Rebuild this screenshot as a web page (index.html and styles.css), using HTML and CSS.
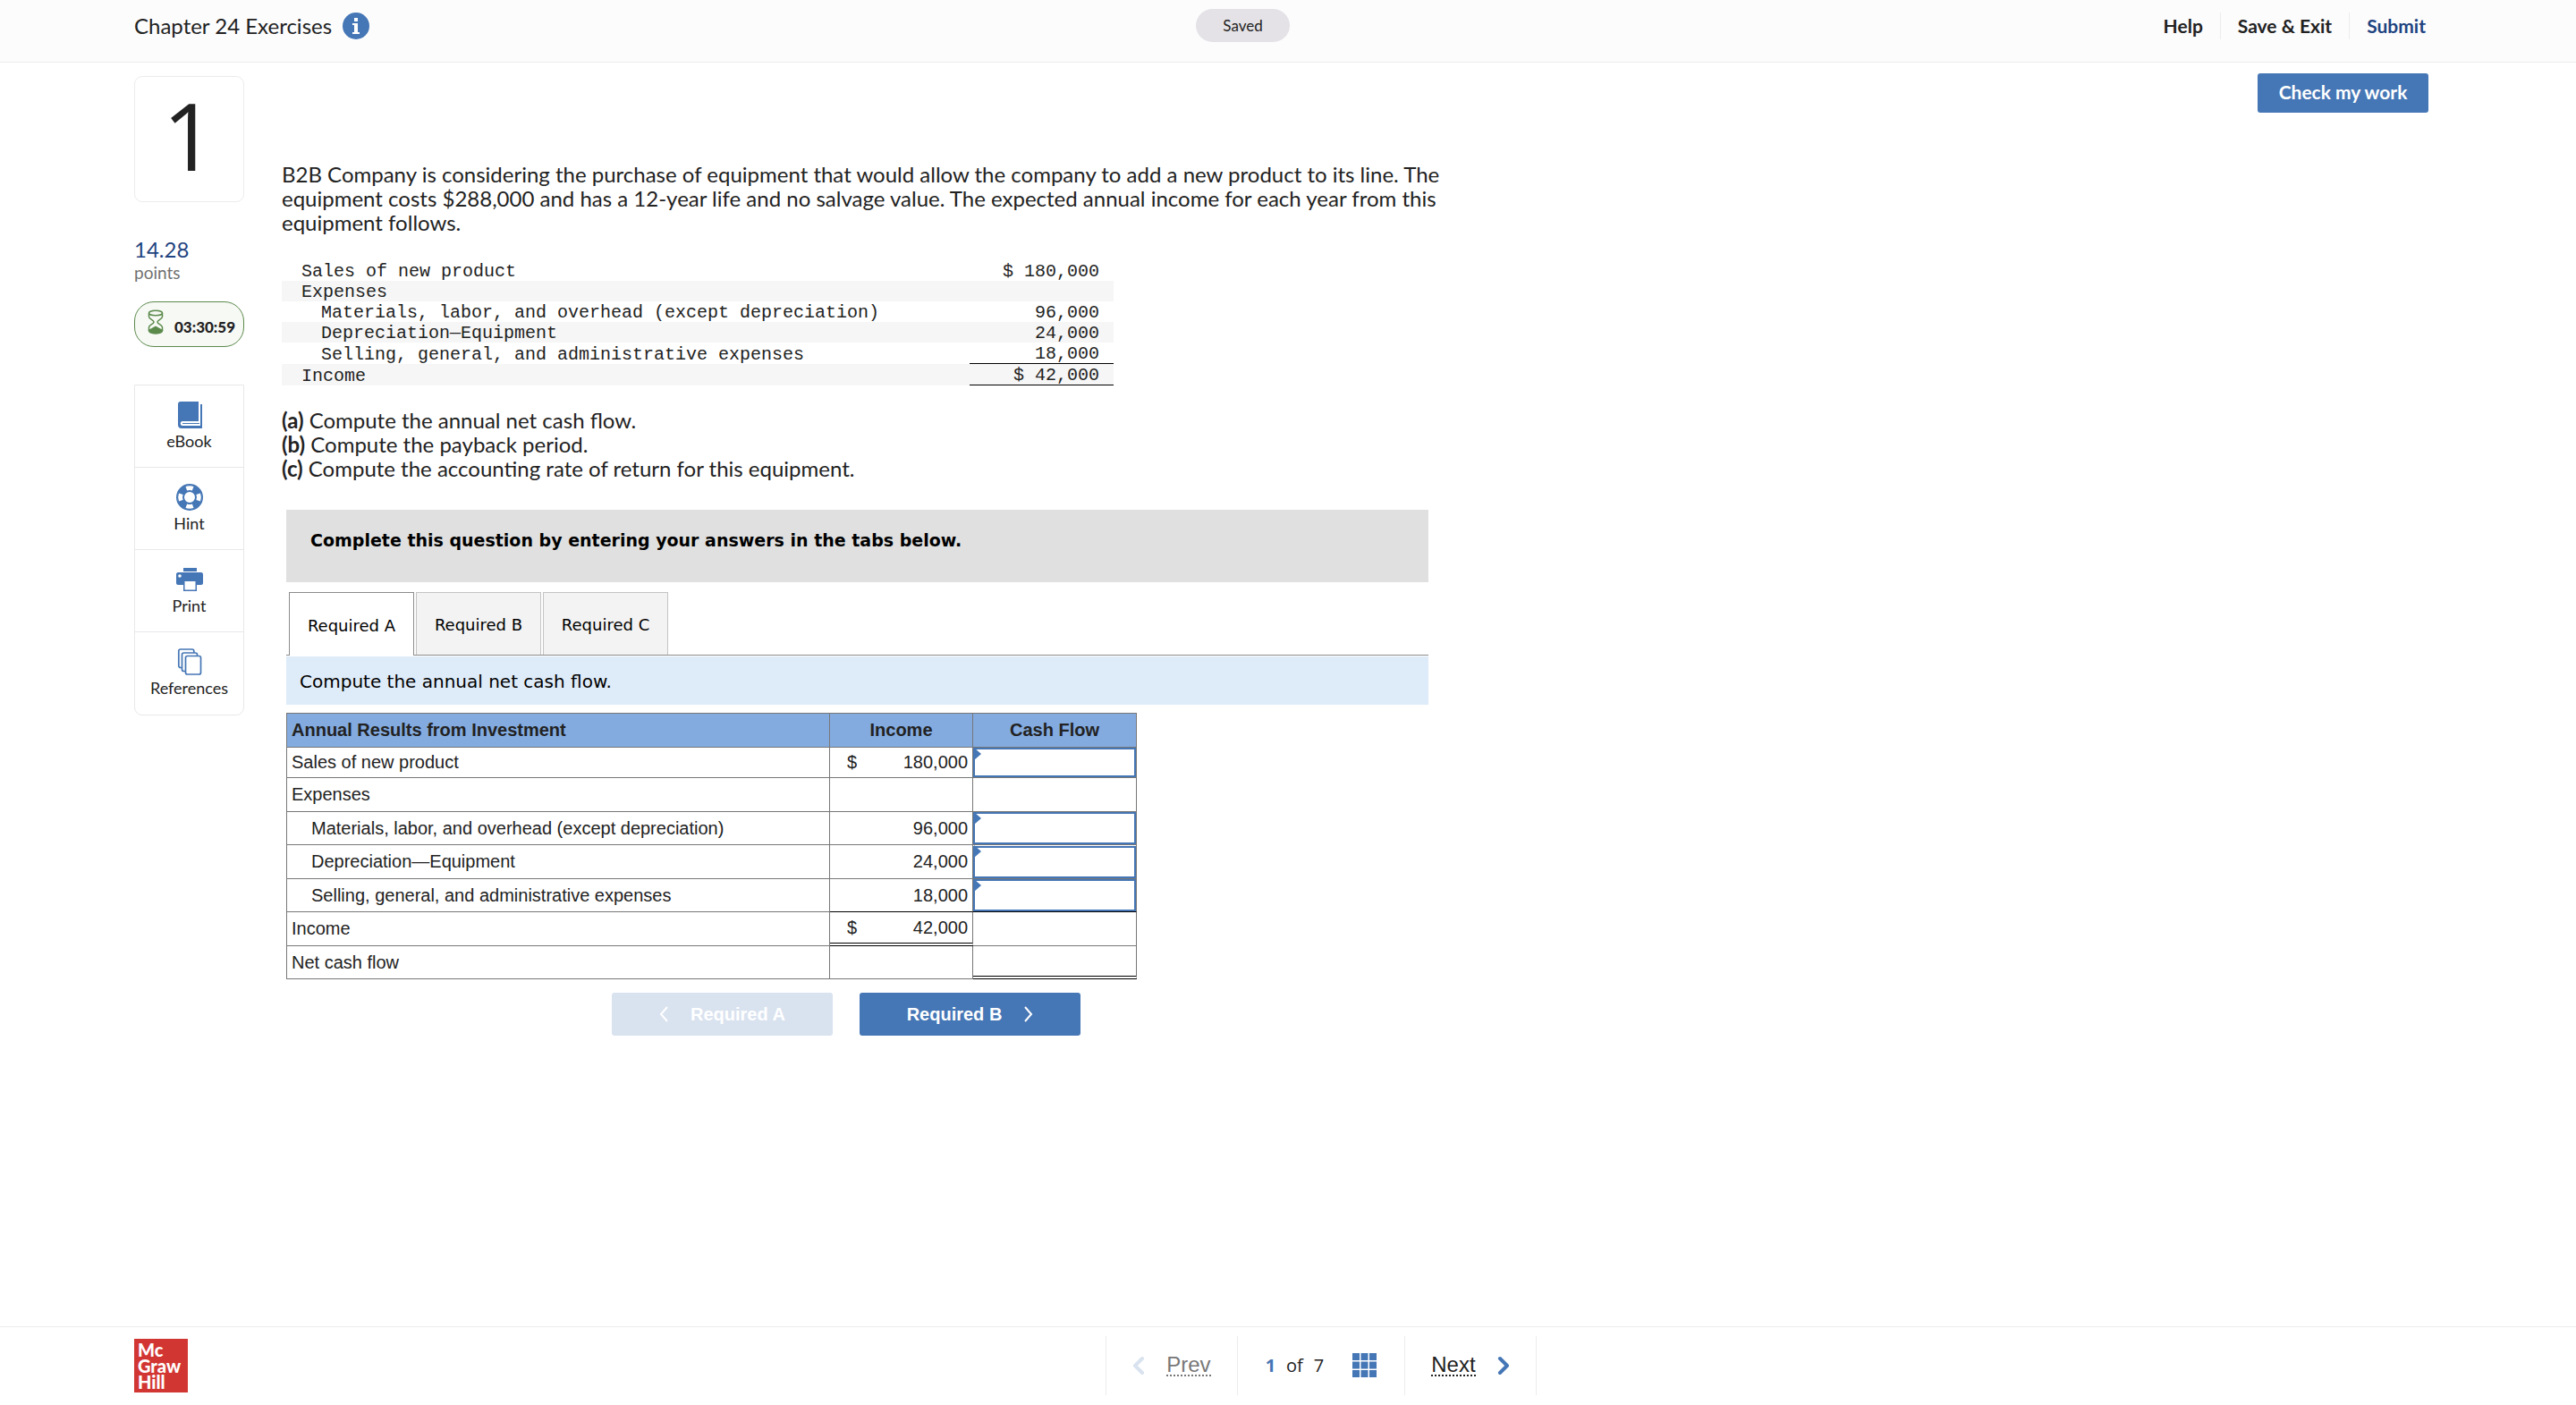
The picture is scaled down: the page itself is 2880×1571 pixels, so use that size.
FILE: index.html
```html
<!DOCTYPE html>
<html lang="en">

<head>
    <meta charset="UTF-8">
    <meta name="viewport" content="width=device-width, initial-scale=1.0">
    <title>Chapter 24 Exercises</title>

    <link rel="stylesheet" href="styles.css">
</head>

<body>
    <header class="header">
        <div class="title">
            <h1>Chapter 24 Exercises</h1>
            <button class="info_btn" type="button" aria-label="Assignment info">
                <svg width="30" height="30" viewBox="0 0 30 30">
                    <circle cx="15" cy="15" r="15" fill="#4576b5" />
                    <path d="M13 6h4v4h-4zM11 12h6v10h2v2h-8v-2h2v-8h-2z" fill="#fff" />
                </svg>
            </button>
        </div>
        <span class="saved">Saved</span>
        <nav class="header_nav">
            <a href="#">Help</a>
            <a href="#">Save &amp; Exit</a>
            <a href="#" class="submit">Submit</a>
        </nav>
    </header>

    <main class="main">
        <aside class="sidebar">
            <div class="number">1</div>
            <div class="score">14.28</div>
            <div class="points">points</div>
            <div class="timer">
                <svg width="18" height="28" viewBox="0 0 18 28" fill="none" stroke="#5b8a4b" stroke-width="1.5">
                    <ellipse cx="9" cy="4" rx="7.5" ry="2.8" />
                    <path d="M1.5 4v4c0 3 5.500 3.500 5.500 6s-5.500 3-5.500 6v4M16.500 4v4c0 3-5.500 3.500-5.500 6s5.500 3 5.500 6v4" />
                    <path d="M1.500 23.500c0 4.500 15 4.500 15 0-2-1-4-2-7.500-4-3.500 2-5.500 3-7.500 4z" fill="#5b8a4b" />
                </svg>
                <span>03:30:59</span>
            </div>
            <div class="tools">
                <button type="button">
                    <svg width="30" height="30" viewBox="0 0 30 30">
                        <path d="M5 0h20v22H7c-3 0-3 5 0 5h20V3h2v27H6c-2 0-4-1-4-4V3c0-2 1-3 3-3z" fill="#4576b5" />
                        <path d="M7 24.500h19" stroke="#4576b5" />
                    </svg>
                    eBook
                </button>
                <button type="button">
                    <svg width="30" height="30" viewBox="0 0 30 30">
                        <circle cx="15" cy="15" r="10" fill="none" stroke="#4576b5" stroke-width="8" />
                        <circle cx="15" cy="15" r="14.300" fill="none" stroke="#4576b5" stroke-width="1.400" />
                        <path d="M10.500 3a13 13 0 0 1 9 0l-1.600 4.600a8 8 0 0 0-5.800 0zM10.500 27a13 13 0 0 0 9 0l-1.600-4.600a8 8 0 0 1-5.800 0zM3 10.500a13 13 0 0 0 0 9l4.600-1.600a8 8 0 0 1 0-5.800zM27 10.500a13 13 0 0 1 0 9l-4.600-1.600a8 8 0 0 0 0-5.800z" fill="#fff" />
                    </svg>
                    Hint
                </button>
                <button type="button">
                    <svg width="30" height="30" viewBox="0 0 30 30">
                        <path d="M8 2h15v4H8zM2 7h26c1 0 2 1 2 2v10c0 1-1 2-2 2h-5v7H8v-7H2c-1 0-2-1-2-2V9c0-1 1-2 2-2z" fill="#4576b5" />
                        <path d="M9.500 17h12v9.500h-12z" fill="#fff" />
                        <circle cx="4" cy="11" r="1.800" fill="#fff" />
                    </svg>
                    Print
                </button>
                <button type="button">
                    <svg width="30" height="30" viewBox="0 0 30 30" fill="#fff" stroke="#4576b5" stroke-width="1.700">
                        <rect x="2.800" y="1" width="17" height="20.500" rx="2" />
                        <rect x="6.500" y="5" width="17" height="20.500" rx="2" />
                        <rect x="10.500" y="8.500" width="17" height="20.500" rx="2" />
                    </svg>
                    References
                </button>
            </div>
        </aside>

        <section class="content">
            <div class="question">
                <p>
                    B2B Company is considering the purchase of equipment that would allow the company to add a new product to its line. The<br>
                    equipment costs $288,000 and has a 12-year life and no salvage value. The expected annual income for each year from this<br>
                    equipment follows.
                </p>
                <table class="data_table">
                    <tr>
                        <td>Sales of new product</td>
                        <td>$ 180,000</td>
                    </tr>
                    <tr>
                        <td>Expenses</td>
                        <td></td>
                    </tr>
                    <tr>
                        <td class="indent">Materials, labor, and overhead (except depreciation)</td>
                        <td>96,000</td>
                    </tr>
                    <tr>
                        <td class="indent">Depreciation—Equipment</td>
                        <td>24,000</td>
                    </tr>
                    <tr>
                        <td class="indent">Selling, general, and administrative expenses</td>
                        <td class="line">18,000</td>
                    </tr>
                    <tr>
                        <td>Income</td>
                        <td class="line">$ 42,000</td>
                    </tr>
                </table>
                <p>
                    <b>(a)</b> Compute the annual net cash flow.<br>
                    <b>(b)</b> Compute the payback period.<br>
                    <b>(c)</b> Compute the accounting rate of return for this equipment.
                </p>
            </div>

            <div class="answer">
                <h2 class="answer_title">Complete this question by entering your answers in the tabs below.</h2>
                <div class="tabs">
                    <button class="active" type="button">Required A</button>
                    <button type="button">Required B</button>
                    <button type="button">Required C</button>
                </div>
                <div class="task">Compute the annual net cash flow.</div>

                <div class="sheet">
                    <table class="sheet_table">
                        <thead>
                            <tr>
                                <th class="col_name">Annual Results from Investment</th>
                                <th class="col_income">Income</th>
                                <th class="col_cash">Cash Flow</th>
                            </tr>
                        </thead>
                        <tbody>
                            <tr>
                                <td>Sales of new product</td>
                                <td><div class="money"><span>$</span><span>180,000</span></div></td>
                                <td class="entry"><input type="text" aria-label="Sales of new product cash flow"></td>
                            </tr>
                            <tr>
                                <td>Expenses</td>
                                <td></td>
                                <td></td>
                            </tr>
                            <tr>
                                <td class="indent">Materials, labor, and overhead (except depreciation)</td>
                                <td><div class="money"><span></span><span>96,000</span></div></td>
                                <td class="entry"><input type="text" aria-label="Materials, labor, and overhead cash flow"></td>
                            </tr>
                            <tr>
                                <td class="indent">Depreciation—Equipment</td>
                                <td><div class="money"><span></span><span>24,000</span></div></td>
                                <td class="entry"><input type="text" aria-label="Depreciation cash flow"></td>
                            </tr>
                            <tr>
                                <td class="indent">Selling, general, and administrative expenses</td>
                                <td class="sum"><div class="money"><span></span><span>18,000</span></div></td>
                                <td class="entry sum"><input type="text" aria-label="Selling, general, and administrative cash flow"></td>
                            </tr>
                            <tr>
                                <td>Income</td>
                                <td class="total"><div class="money"><span>$</span><span>42,000</span></div></td>
                                <td></td>
                            </tr>
                            <tr>
                                <td>Net cash flow</td>
                                <td></td>
                                <td class="total"></td>
                            </tr>
                        </tbody>
                    </table>

                    <div class="step_btns">
                        <button type="button" disabled>
                            <svg width="10" height="18" viewBox="0 0 10 18" fill="none" stroke="#fff" stroke-width="2"><path d="M9 1L2 9l7 8" /></svg>
                            Required A
                        </button>
                        <button type="button">
                            Required B
                            <svg width="10" height="18" viewBox="0 0 10 18" fill="none" stroke="#fff" stroke-width="2"><path d="M1 1l7 8-7 8" /></svg>
                        </button>
                    </div>
                </div>
            </div>
        </section>

        <button class="check_btn" type="button">Check my work</button>
    </main>

    <footer class="footer">
        <div class="logo">Mc<br>Graw<br>Hill</div>
        <nav class="pager">
            <div class="pager_side">
                <svg width="14" height="22" viewBox="0 0 14 22" fill="none" stroke="#d9e2ef" stroke-width="4" stroke-linecap="round" stroke-linejoin="round"><path d="M11 3l-8 8 8 8" /></svg>
                <a href="#" class="off">Prev</a>
            </div>
            <div class="pager_count">
                <b>1</b><span>of</span><span>7</span>
                <button type="button" aria-label="All questions">
                    <svg width="27" height="27" viewBox="0 0 27 27" fill="#4576b5">
                        <path d="M0 0h8v8H0zM9.500 0h8v8h-8zM19 0h8v8h-8zM0 9.500h8v8H0zM9.500 9.500h8v8h-8zM19 9.500h8v8h-8zM0 19h8v8H0zM9.500 19h8v8h-8zM19 19h8v8h-8z" />
                    </svg>
                </button>
            </div>
            <div class="pager_side">
                <a href="#">Next</a>
                <svg width="14" height="22" viewBox="0 0 14 22" fill="none" stroke="#4576b5" stroke-width="4" stroke-linecap="round" stroke-linejoin="round"><path d="M3 3l8 8-8 8" /></svg>
            </div>
        </nav>
    </footer>
</body>

</html>
```

FILE: styles.css
```css
* {
    box-sizing: border-box;
}

body {
    margin: 0;
    min-height: 100vh;
    display: flex;
    flex-direction: column;
    font-family: Lato, sans-serif;
    font-size: 24px;
    color: #222;
    background-color: white;
}

button {
    font-family: inherit;
    border: 0;
    padding: 0;
    color: inherit;
    background: none;
    cursor: pointer;
}

svg {
    display: block;
    flex: none;
}

/* header */
.header {
    height: 70px;
    padding: 0 168px 12px 150px;
    border-bottom: 1px solid #ececee;
    background-color: #fcfcfd;
    display: grid;
    grid-template-columns: 1187fr auto 1270fr;
    align-items: center;
}

.title {
    display: flex;
    align-items: center;
    gap: 12px;
}

h1 {
    margin: 0;
    font-size: 24px;
    font-weight: 400;
}

.saved {
    width: 105px;
    height: 37px;
    line-height: 37px;
    border-radius: 19px;
    background-color: #e4e2e6;
    font-size: 17px;
    text-align: center;
}

.header_nav {
    display: flex;
    justify-content: flex-end;
}

.header_nav a {
    padding: 0 19px;
    line-height: 30px;
    border-left: 1px solid #ececee;
    font-size: 21px;
    font-weight: 700;
    color: #222;
    text-decoration: none;
}

.header_nav a:first-child {
    border-left: 0;
}

.header_nav .submit {
    padding-right: 0;
    color: #1f4480;
}

/* body */
.main {
    flex: 1;
    display: flex;
    align-items: flex-start;
    padding: 12px 165px 24px 150px;
}

.sidebar {
    width: 123px;
    margin: 3px 42px 0 0;
    flex: none;
}

.number {
    height: 141px;
    line-height: 130px;
    border: 1px solid #ececee;
    border-radius: 9px;
    font-family: "Open Sans", sans-serif;
    font-size: 104px;
    font-weight: 500;
    text-align: center;
}

.score {
    margin-top: 38px;
    line-height: 30px;
    color: #1f4480;
}

.points {
    line-height: 22px;
    font-size: 19px;
    color: #717171;
}

.timer {
    height: 51px;
    margin: 21px 0 42px;
    border: 1px solid #5b8a4b;
    border-radius: 22px;
    background-color: #f7f9f5;
    display: flex;
    align-items: center;
    justify-content: center;
    gap: 12px;
    font-size: 17px;
    font-weight: 900;
}

.timer span {
    padding-top: 5px;
}

.timer svg {
    margin: 0 0 5px 5px;
}

.tools {
    border: 1px solid #e8e8ea;
    border-radius: 0 0 9px 9px;
}

.tools button {
    width: 100%;
    height: 92px;
    padding-top: 18px;
    border-bottom: 1px solid #e8e8ea;
    font-size: 18px;
    line-height: 22px;
    display: flex;
    flex-direction: column;
    align-items: center;
    gap: 3px;
}

.tools button:last-child {
    border-bottom: 0;
}

.content {
    flex: 1;
}

.question {
    padding-top: 99px;
    line-height: 27px;
}

.question p {
    margin: 0;
    white-space: nowrap;
}

.data_table {
    width: 930px;
    margin: 29px 0 25px;
    border-spacing: 0;
    font-family: "Liberation Mono", monospace;
    font-size: 20px;
    line-height: 21px;
}

.data_table td {
    height: 23px;
    padding: 2px 16px 0 22px;
}

.data_table td:last-child {
    width: 161px;
    padding-left: 0;
    text-align: right;
}

.data_table tr:nth-child(even) {
    background-color: #f6f6f6;
}

.data_table td.indent {
    padding-left: 44px;
}

.data_table td.line {
    height: 24px;
    border-bottom: 1px solid black;
}

/* answer */
.answer {
    width: 1277px;
    margin: 33px 0 0 5px;
    font-family: "DejaVu Sans", sans-serif;
    color: black;
}

.answer_title {
    height: 81px;
    margin: 0;
    padding: 20px 27px;
    background-color: #e0e0e0;
    font-size: 19px;
    line-height: 28px;
}

.tabs {
    display: flex;
    gap: 2px;
    padding: 11px 3px 0;
    border-bottom: 1px solid #8c8c8c;
}

.tabs button {
    width: 140px;
    height: 70px;
    padding-top: 2px;
    border: 1px solid #c4c4c4;
    border-bottom: 0;
    background-color: #f3f3f3;
    font-size: 18px;
}

.tabs .active {
    height: 71px;
    margin-bottom: -1px;
    border-color: #8c8c8c;
    background-color: white;
}

.task {
    margin: 1px 0 9px;
    padding: 2px 15px 0;
    background-color: #deebf8;
    font-size: 20px;
    line-height: 52px;
}

.sheet {
    width: 951px;
    font-family: "Liberation Sans", sans-serif;
    font-size: 20px;
    color: #222;
}

.sheet_table {
    width: 100%;
    table-layout: fixed;
    border-spacing: 0;
    border: solid #777;
    border-width: 1px 0 0 1px;
    line-height: 23px;
}

.sheet_table th {
    height: 38px;
    background-color: #83abe0;
}

.sheet_table th,
.sheet_table td {
    padding: 0 5px;
    border: solid #777;
    border-width: 0 1px 1px 0;
}

.sheet_table td {
    height: 37px;
}

.sheet_table tr:nth-child(even) td {
    height: 38px;
}

.sheet_table tr:first-child td {
    height: 34px;
}

.sheet_table .col_name {
    width: 607px;
    text-align: left;
}

.sheet_table .col_income {
    width: 160px;
}

.sheet_table .indent {
    padding-left: 27px;
}

.sheet_table .sum {
    border-bottom-color: black;
}

.sheet_table .total {
    border-bottom: 4px double black;
}

.money {
    display: flex;
    justify-content: space-between;
    padding-left: 14px;
}

.sheet_table .entry {
    position: relative;
    padding: 0;
}

.entry input {
    display: block;
    width: 100%;
    height: 36px;
    border: 2px solid #4576b5;
    padding: 0 8px;
    font-size: 20px;
    text-align: right;
}

.sheet_table tr:first-child input {
    height: 33px;
}

/* corner marker over each input */
.entry::before {
    content: "";
    position: absolute;
    left: 1px;
    top: 0;
    border: solid transparent;
    border-width: 7px 0 7px 8px;
    border-left-color: #4576b5;
}

.step_btns {
    display: flex;
    gap: 30px;
    padding: 15px 0 0 364px;
}

.step_btns button {
    width: 247px;
    height: 48px;
    border-radius: 3px;
    background-color: #4576b5;
    color: white;
    font-size: 20px;
    font-weight: 700;
    display: flex;
    align-items: center;
    justify-content: center;
    gap: 25px;
}

.step_btns button:disabled {
    background-color: #d9e2ef;
}

.check_btn {
    width: 191px;
    height: 44px;
    padding-bottom: 4px;
    border-radius: 3px;
    background-color: #4576b5;
    color: white;
    font-size: 21px;
    font-weight: 700;
}

/* footer */
.footer {
    height: 88px;
    padding: 0 150px 2px;
    border-top: 1px solid #ececee;
    display: grid;
    grid-template-columns: 1087fr auto 1013fr;
    align-items: center;
}

.logo {
    width: 60px;
    height: 60px;
    padding: 3px 4px;
    background-color: #d23632;
    color: white;
    font-size: 20px;
    font-weight: 900;
    line-height: 18px;
}

.pager {
    display: flex;
    border-right: 1px solid #ececee;
}

.pager > div {
    height: 66px;
    border-left: 1px solid #ececee;
    display: flex;
    align-items: center;
    justify-content: center;
}

.pager_side {
    width: 147px;
    gap: 24px;
}

.pager_side a {
    border-bottom: 2px dotted #222;
    color: #222;
    font-family: "Liberation Sans", sans-serif;
    line-height: 23px;
    text-decoration: none;
}

.pager_side .off {
    border-color: #777;
    color: #777;
}

.pager_count {
    width: 187px;
    gap: 12px;
    font-family: "Open Sans", sans-serif;
    font-size: 20px;
}

.pager_count b {
    color: #4576b5;
}

.pager_count button {
    margin-left: 20px;
}
```
